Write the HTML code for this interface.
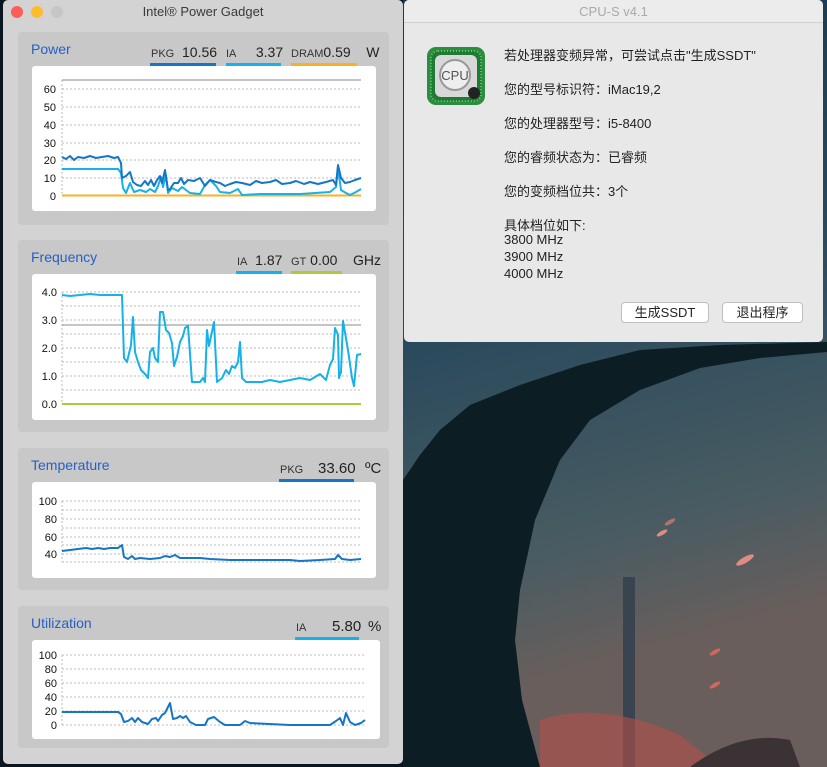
<!DOCTYPE html>
<html><head><meta charset="utf-8"><style>
*{margin:0;padding:0;box-sizing:border-box}
body{width:827px;height:767px;overflow:hidden;position:relative;background:#0c1a28;font-family:"Liberation Sans","Noto Sans CJK SC",sans-serif}
.abs{position:absolute}
#lw{left:3px;top:0;width:400px;height:764px;background:#d3d3d3;border-radius:5px;overflow:hidden}
.tb{height:23px;text-align:center;font-size:13px;color:#3a3a3a;line-height:24px;position:relative}
.dot{position:absolute;top:6px;width:12px;height:12px;border-radius:50%}
.panel{position:absolute;left:15px;width:371px;background:#c8c8c8;border-radius:4px}
.pt{position:absolute;left:13px;top:9px;color:#2660c4;font-size:14px}
.lab{position:absolute;font-size:14px;color:#222;white-space:nowrap;top:12px}
.lab small{font-size:11px;color:#333}
.bar{position:absolute;height:3px}
#rw{left:404px;top:0;width:419px;height:342px;background:#e8e8e8;border-radius:5px;overflow:hidden}
#rw .tb{color:#a9a9a9;background:#ececec;border-bottom:1px solid #d0d0d0}
.t{position:absolute;left:100px;font-size:13px;color:#222;white-space:nowrap}
.btn{position:absolute;top:302px;height:21px;background:#fff;border:1px solid #bfbfbf;border-radius:4px;font-size:13px;text-align:center;line-height:19px;color:#222}
svg text{font-family:"Liberation Sans",sans-serif;font-size:11px;fill:#111}
</style></head><body>
<svg class="abs" style="left:0;top:0" width="827" height="767">
<defs>
<linearGradient id="sky" x1="0" y1="0" x2="0.3" y2="1"><stop offset="0" stop-color="#15304c"/><stop offset="0.5" stop-color="#24475c"/><stop offset="0.85" stop-color="#4a5c62"/><stop offset="1" stop-color="#6a5e5c"/></linearGradient>
</defs>
<rect width="827" height="767" fill="url(#sky)"/>
<rect x="0" y="0" width="403" height="767" fill="#0a1520"/>
<path d="M403 480 L420 455 L440 430 L470 405 L520 385 L580 365 L640 350 L720 345 L827 342 L827 352 L760 358 L700 368 L640 390 L590 420 L560 460 L535 520 L520 590 L515 640 L522 700 L540 767 L403 767 Z" fill="#0c1d24"/>
<rect x="623" y="577" width="12" height="190" fill="#3a4350"/>
<path d="M540 720 Q600 700 680 735 L720 767 L540 767Z" fill="#b4504a" opacity="0.6"/>
<path d="M690 767 Q740 730 790 740 L800 767Z" fill="#3a3234"/>
<ellipse cx="745" cy="560" rx="10" ry="3" fill="#e08c84" transform="rotate(-30 745 560)"/>
<ellipse cx="662" cy="533" rx="6" ry="2" fill="#e08c84" transform="rotate(-30 662 533)"/>
<ellipse cx="670" cy="522" rx="6" ry="2" fill="#d07870" transform="rotate(-30 670 522)" opacity=".8"/>
<ellipse cx="715" cy="652" rx="6" ry="2" fill="#d06860" transform="rotate(-30 715 652)"/>
<ellipse cx="715" cy="685" rx="6" ry="2" fill="#d06860" transform="rotate(-30 715 685)"/>
</svg>

<div id="lw" class="abs">
<div class="tb"><span class="dot" style="left:8px;background:#fc5f57"></span><span class="dot" style="left:28px;background:#fdbc2e"></span><span class="dot" style="left:48px;background:#c6c6c6"></span>Intel® Power Gadget</div>

<div class="panel" style="top:32px;height:193px">
<div class="pt">Power</div>
<div class="lab" style="left:133px"><small>PKG</small>&nbsp; 10.56</div><div class="bar" style="left:132px;top:31px;width:66px;background:#1576c6"></div>
<div class="lab" style="left:208px"><small>IA</small>&nbsp;&nbsp;&nbsp;&nbsp; 3.37</div><div class="bar" style="left:208px;top:31px;width:55px;background:#16b1e8"></div>
<div class="lab" style="left:273px"><small>DRAM</small>0.59&nbsp;&nbsp;&nbsp; W</div><div class="bar" style="left:273px;top:31px;width:66px;background:#f7b224"></div>
</div>
<div class="panel" style="top:240px;height:192px">
<div class="pt">Frequency</div>
<div class="lab" style="left:219px"><small>IA</small>&nbsp; 1.87</div><div class="bar" style="left:218px;top:31px;width:46px;background:#16b1e8"></div>
<div class="lab" style="left:273px"><small>GT</small> 0.00&nbsp;&nbsp;&nbsp; GHz</div><div class="bar" style="left:273px;top:31px;width:51px;background:#a9cb3c"></div>
</div>
<div class="panel" style="top:448px;height:142px">
<div class="pt">Temperature</div>
<div class="lab" style="left:262px"><small>PKG</small></div>
<div class="lab" style="left:300px;font-size:15px">33.60</div>
<div class="lab" style="left:347px;font-size:15px">ºC</div>
<div class="bar" style="left:261px;top:31px;width:75px;background:#1576c6"></div>
</div>
<div class="panel" style="top:606px;height:142px">
<div class="pt">Utilization</div>
<div class="lab" style="left:278px"><small>IA</small></div>
<div class="lab" style="left:314px;font-size:15px">5.80</div>
<div class="lab" style="left:350px;font-size:15px">%</div>
<div class="bar" style="left:277px;top:31px;width:64px;background:#16b1e8"></div>
</div>
</div>

<svg class="abs" style="left:0;top:0" width="403" height="767">
<g fill="#fff"><rect x="32" y="66" width="344" height="145" rx="3"/><rect x="32" y="274" width="344" height="146" rx="3"/><rect x="32" y="482" width="344" height="96" rx="3"/><rect x="32" y="640" width="348" height="99" rx="3"/></g>
<g stroke="#bbb" stroke-dasharray="2 2" stroke-width="1">
<path d="M62 89H361M62 107H361M62 125H361M62 143H361M62 160H361M62 178H361M62 80V196"/>
<path d="M62 292H361M62 306H361M62 320H361M62 334H361M62 348H361M62 362H361M62 376H361M62 390H361M62 292V404"/>
<path d="M62 501H361M62 510H361M62 519H361M62 528H361M62 537H361M62 545H361M62 554H361M62 562H361M62 501V562"/>
<path d="M62 655H365M62 669H365M62 683H365M62 697H365M62 711H365M62 725H365M62 655V725"/>
</g>
<path d="M62 80H361M62 325H361" stroke="#888" stroke-width="1"/>
<g text-anchor="end">
<text x="56" y="93">60</text><text x="56" y="111">50</text><text x="56" y="129">40</text><text x="56" y="147">30</text><text x="56" y="164">20</text><text x="56" y="182">10</text><text x="56" y="200">0</text>
<text x="57" y="296">4.0</text><text x="57" y="324">3.0</text><text x="57" y="352">2.0</text><text x="57" y="380">1.0</text><text x="57" y="408">0.0</text>
<text x="57" y="505">100</text><text x="57" y="523">80</text><text x="57" y="541">60</text><text x="57" y="558">40</text>
<text x="57" y="659">100</text><text x="57" y="673">80</text><text x="57" y="687">60</text><text x="57" y="701">40</text><text x="57" y="715">20</text><text x="57" y="729">0</text>
</g>
<g fill="none" stroke-width="2" stroke-linejoin="round">
<path d="M62 195.5H361" stroke="#f7b224"/>
<polyline stroke="#16b1e8" points="62,169 118,169 121,173 123,188 126,193 130,183 134,192 140,190 146,192 150,189 155,192 158,186 161,177 163,187 166,175 168,193 172,188 178,191 182,187 186,190 190,193 200,194 205,185 210,180 216,186 220,192 230,193 238,189 242,195 260,194 300,194 330,192 336,187 338,168 341,190 346,193 350,195 356,192 361,189"/>
<polyline stroke="#1576c6" points="62,157 66,159 70,156 74,160 78,157 84,158 90,156 96,158 102,157 108,156 114,158 118,157 121,163 122,178 126,176 130,172 133,182 137,185 141,186 145,181 148,185 151,180 154,186 157,180 160,176 162,183 165,170 168,190 170,189 174,183 178,183 181,178 184,184 188,180 194,181 200,178 205,186 210,180 216,182 220,183 225,186 230,184 236,182 242,183 250,185 256,181 262,183 270,182 276,180 282,184 290,183 296,181 304,184 310,182 318,184 326,182 333,180 336,185 338,165 341,178 345,183 350,182 355,180 361,178"/>
<path d="M62 404H361" stroke="#a9cb3c"/>
<polyline stroke="#16b1e8" points="62,295 70,296 80,295 90,294 100,295 110,295 122,295 124,358 127,362 131,345 133,317 135,352 138,362 141,370 145,374 148,378 150,352 153,348 155,358 158,362 160,312 163,312 166,330 169,333 172,343 174,366 177,357 180,342 183,336 185,328 188,326 192,382 200,382 203,378 205,382 207,330 209,346 214,322 217,382 222,378 226,370 229,374 232,366 235,368 238,362 240,342 242,378 246,382 262,382 270,380 280,382 300,378 310,380 320,374 326,380 330,365 333,359 335,328 338,335 339,378 341,372 343,321 348,350 352,378 354,386 357,355 361,354"/>
<polyline stroke="#1576c6" points="62,551 70,550 78,549 86,548 92,549 98,548 104,549 110,548 118,548 122,545 124,557 128,559 132,556 135,559 140,558 150,559 160,558 165,556 170,557 175,555 180,558 190,558 200,558 210,559 230,560 250,560 270,560 290,560 300,561 320,560 335,559 338,555 342,559 350,560 361,559"/>
<polyline stroke="#1576c6" points="62,712 118,712 121,714 124,722 128,721 132,718 135,722 138,718 142,722 148,724 152,719 156,718 158,721 162,715 165,713 168,707 170,703 173,719 177,718 180,716 183,718 186,716 190,722 196,725 205,725 208,719 214,717 220,722 225,725 240,725 245,721 250,723 290,725 330,725 336,721 340,718 343,725 346,713 350,722 355,725 361,723 365,720"/>
</g>
</svg>

<div id="rw" class="abs">
<div class="tb">CPU-S v4.1</div>
<svg class="abs" style="left:23px;top:47px" width="58" height="58">
<rect x="0" y="0" width="58" height="58" rx="9" fill="#2b8d3e"/>
<rect x="4" y="4" width="50" height="50" rx="7" fill="#1f7a33" stroke="#6fc070" stroke-dasharray="1 2" stroke-width="2"/>
<rect x="8" y="8" width="42" height="42" rx="6" fill="#d8d8d8"/>
<circle cx="28" cy="28" r="15" fill="#eee" stroke="#999" stroke-width="2"/>
<text x="28" y="33" text-anchor="middle" style="font-size:13px;fill:#555">CPU</text>
<circle cx="47" cy="46" r="6" fill="#222"/>
</svg>
<div class="t" style="top:45px">若处理器变频异常，可尝试点击"生成SSDT"</div>
<div class="t" style="top:79px">您的型号标识符：iMac19,2</div>
<div class="t" style="top:113px">您的处理器型号：i5-8400</div>
<div class="t" style="top:147px">您的睿频状态为：已睿频</div>
<div class="t" style="top:181px">您的变频档位共：3个</div>
<div class="t" style="top:215px">具体档位如下:</div>
<div class="t" style="top:232px">3800 MHz</div>
<div class="t" style="top:249px">3900 MHz</div>
<div class="t" style="top:266px">4000 MHz</div>
<div class="btn" style="left:217px;width:88px">生成SSDT</div>
<div class="btn" style="left:318px;width:81px">退出程序</div>
</div>
</body></html>
